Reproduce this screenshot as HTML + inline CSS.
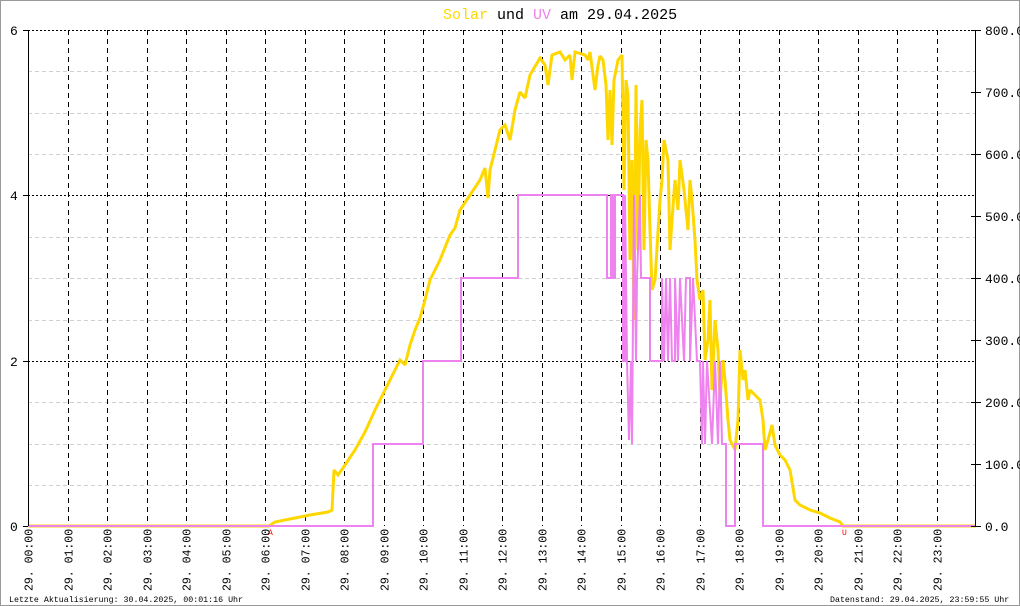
<!DOCTYPE html>
<html><head><meta charset="utf-8"><style>
html,body{margin:0;padding:0;background:#fff}
svg{display:block}
text{font-family:"Liberation Mono","DejaVu Sans Mono",monospace}
</style></head><body>
<svg width="1020" height="606" viewBox="0 0 1020 606" xmlns="http://www.w3.org/2000/svg">
<rect x="0.5" y="0.5" width="1019" height="605" fill="#fff" stroke="#999"/>
<text x="443" y="19" font-size="15"><tspan fill="#FFD700">Solar</tspan> und <tspan fill="#EE82EE">UV</tspan> am 29.04.2025</text>
<g stroke="#d0d0d0" stroke-dasharray="4,3" stroke-width="1">
<line x1="28" y1="71.5" x2="976" y2="71.5"/><line x1="28" y1="113.5" x2="976" y2="113.5"/>
<line x1="28" y1="154.5" x2="976" y2="154.5"/><line x1="28" y1="237.5" x2="976" y2="237.5"/>
<line x1="28" y1="278.5" x2="976" y2="278.5"/><line x1="28" y1="320.5" x2="976" y2="320.5"/>
<line x1="28" y1="402.5" x2="976" y2="402.5"/><line x1="28" y1="444.5" x2="976" y2="444.5"/>
<line x1="28" y1="485.5" x2="976" y2="485.5"/>
</g>
<g stroke="#000" stroke-dasharray="2,2" stroke-width="1">
<line x1="28" y1="30.5" x2="976" y2="30.5"/><line x1="28" y1="195.5" x2="976" y2="195.5"/><line x1="28" y1="361.5" x2="976" y2="361.5"/>
</g>
<g stroke="#000" stroke-dasharray="5,4" stroke-width="1" id="vg"></g>
<polyline fill="none" stroke="#FFD700" stroke-width="3" stroke-linejoin="miter" stroke-miterlimit="2" points="28,526 269,526 275,522 290,519 310,515 328,512 332,510 334,470 338,475 345,465 355,450 365,432 375,410 385,390 395,370 400,360 405,365 410,345 415,330 420,318 425,300 430,280 440,260 450,235 455,228 460,210 470,195 480,180 485,168 488,198 490,170 495,150 500,130 505,125 510,140 515,110 520,92 525,98 530,75 540,58 545,65 548,85 552,55 560,52 565,60 570,55 572,80 575,52 585,55 588,60 590,52 595,90 598,65 600,56 603,60 606,85 608,140 610,90 612,145 614,80 618,60 622,55 624,190 626,80 628,95 630,260 632,160 634,320 636,85 638,250 640,130 642,100 644,250 646,140 648,160 650,230 652,290 655,280 660,200 662,180 664,140 668,160 670,250 672,220 675,180 678,210 680,160 684,190 688,230 690,180 692,200 695,240 697,280 700,300 703,290 705,360 708,340 710,300 712,390 715,320 718,350 720,400 723,360 725,380 728,420 730,440 735,450 738,420 740,350 743,380 745,370 748,400 750,390 755,395 760,400 763,420 765,450 768,440 772,425 775,445 780,455 785,460 790,470 795,500 800,505 810,510 820,513 830,518 840,522 843,526 976,526"/>
<polyline fill="none" stroke="#EE82EE" stroke-width="2" points="28,526 373,526 373,444 423,444 423,361 461,361 461,278 518,278 518,195 607,195 607,278 611,278 611,195 613,195 613,278 615,278 615,195 623,195 623,361 625,361 625,195 627,361 629,440 631,361 632,444 634,195 636,361 637,278 640,195 641,278 650,278 650,361 662,361 662,278 664,361 666,278 668,361 670,278 672,361 675,361 675,278 678,361 680,278 684,361 686,278 690,278 690,361 693,278 697,361 700,361 702,444 703,361 705,444 707,361 712,444 715,361 718,444 720,361 722,444 726,444 726,526 735,526 735,444 763,444 763,526 976,526"/>
<line x1="28.5" y1="30" x2="28.5" y2="526" stroke="#000"/>
<line x1="975.5" y1="30" x2="975.5" y2="526" stroke="#000"/>
<g stroke="#000"><line x1="23" y1="30.5" x2="28" y2="30.5"/><line x1="23" y1="195.5" x2="28" y2="195.5"/><line x1="23" y1="361.5" x2="28" y2="361.5"/><line x1="23" y1="526.5" x2="28" y2="526.5"/></g>
<g font-size="13" fill="#000">
<text x="10" y="35">6</text><text x="10" y="200">4</text><text x="10" y="366">2</text><text x="10" y="531">0</text>
</g>
<g font-size="13" fill="#000" id="rl"></g>
<text x="268" y="535" font-size="8" fill="#f00">A</text>
<text x="842" y="535" font-size="8" fill="#f00">U</text>
<g font-size="11.5" fill="#000" id="bl"></g>
<text x="9" y="602" font-size="8.3">Letzte Aktualisierung: 30.04.2025, 00:01:16 Uhr</text>
<text x="830" y="602" font-size="8.3">Datenstand: 29.04.2025, 23:59:55 Uhr</text>
<script>
var ns="http://www.w3.org/2000/svg",vg=document.getElementById('vg'),bl=document.getElementById('bl'),rl=document.getElementById('rl');
for(var h=0;h<24;h++){var x=Math.round(28+h*39.5)+0.5;
 if(h>0){var l=document.createElementNS(ns,'line');l.setAttribute('x1',x);l.setAttribute('x2',x);l.setAttribute('y1',30);l.setAttribute('y2',526);vg.appendChild(l);}
 var t=document.createElementNS(ns,'text');t.setAttribute('transform','translate('+(x+4)+',591) rotate(-90)');t.textContent='29. '+(h<10?'0':'')+h+':00';bl.appendChild(t);}
for(var i=0;i<=8;i++){var y=526-i*62;var t=document.createElementNS(ns,'text');t.setAttribute('x',985);t.setAttribute('y',y+5);t.textContent=(i*100)+'.0';rl.appendChild(t);
 var l=document.createElementNS(ns,'line');l.setAttribute('x1',971);l.setAttribute('x2',981);l.setAttribute('y1',y+0.5);l.setAttribute('y2',y+0.5);l.setAttribute('stroke','#000');rl.appendChild(l);}
</script>
</svg>
</body></html>
